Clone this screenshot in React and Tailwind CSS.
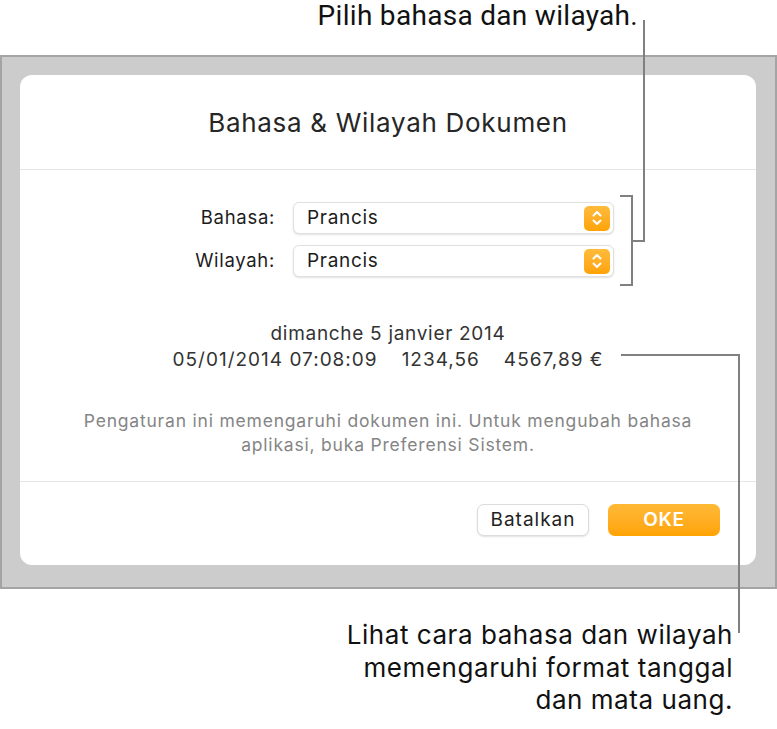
import React from "react";

function Stepper() {
  return (
    <div className="w-[26px] h-[25px] rounded-[5px] bg-gradient-to-b from-[#ffbb3a] to-[#ffa300] flex items-center justify-center">
      <svg width="12" height="18" viewBox="0 0 12 18" fill="none">
        <path d="M2.5 6.5 L6 3 L9.5 6.5" stroke="white" strokeWidth="2" strokeLinecap="round" strokeLinejoin="round" />
        <path d="M2.5 11.5 L6 15 L9.5 11.5" stroke="white" strokeWidth="2" strokeLinecap="round" strokeLinejoin="round" />
      </svg>
    </div>
  );
}

function Row({ label, value }) {
  return (
    <div className="flex items-center h-[32px]">
      <div className="w-[255px] text-right text-[18.5px] tracking-[0.7px] text-[#1c1c1c]">{label}</div>
      <div className="ml-[18px] w-[321px] h-[32px] bg-white rounded-[6px] border border-[#e0e0e0] shadow-[0_1px_2px_rgba(0,0,0,0.12)] flex items-center justify-between pl-[13px] pr-[3px]">
        <span className="text-[19px] tracking-[0.7px] text-[#1c1c1c]">{value}</span>
        <Stepper />
      </div>
    </div>
  );
}

export default function App() {
  return (
    <div className="relative w-[777px] h-[729px] bg-white overflow-hidden" style={{ fontFamily: "Inter, 'Noto Sans', sans-serif" }}>
      <div className="h-[55px] flex items-start justify-end pr-[139px]">
        <span className="text-[28px] leading-[31px] tracking-[0.3px] text-[#111]" style={{ fontFamily: "Roboto, 'Liberation Sans', sans-serif" }}>
          Pilih bahasa dan wilayah.
        </span>
      </div>

      <div className="h-[534px] bg-[#cccccc] border-2 border-[#a4a4a4] pl-[18px] pr-[19px] pt-[18px] pb-[22px]">
        <div className="h-full bg-white rounded-[12px] flex flex-col">
          <div className="h-[95px] flex items-center justify-center border-b border-[#e6e6e6]">
            <span className="text-[26px] tracking-[0.7px] text-[#262626]">Bahasa &amp; Wilayah Dokumen</span>
          </div>

          <div className="pt-[32px] flex flex-col gap-[11px]">
            <Row label="Bahasa:" value="Prancis" />
            <Row label="Wilayah:" value="Prancis" />
          </div>

          <div className="mt-[44px] text-center text-[19px] leading-[26px] text-[#333]">
            <div className="tracking-[0.7px]">dimanche 5 janvier 2014</div>
            <div className="tracking-[1px]">
              05/01/2014 07:08:09<span className="inline-block w-[24px]"></span>1234,56<span className="inline-block w-[24px]"></span>4567,89 €
            </div>
          </div>

          <div className="mt-[36px] text-center text-[17.5px] tracking-[0.8px] leading-[24px] text-[#858585] pb-[24px] border-b border-[#e6e6e6]">
            Pengaturan ini memengaruhi dokumen ini. Untuk mengubah bahasa
            <br />
            aplikasi, buka Preferensi Sistem.
          </div>

          <div className="flex justify-end gap-[19px] pr-[36px] pt-[22px]">
            <button className="w-[112px] h-[32px] rounded-[7px] bg-white border border-[#dcdcdc] shadow-[0_1px_2px_rgba(0,0,0,0.12)] text-[19px] tracking-[1px] text-[#222]">
              Batalkan
            </button>
            <button className="w-[112px] h-[32px] rounded-[7px] bg-gradient-to-b from-[#ffb935] to-[#ffa300] text-[19px] tracking-[0.6px] font-semibold text-white">
              OKE
            </button>
          </div>
        </div>
      </div>

      <div className="mt-[30px] pr-[44px] text-right text-[26px] tracking-[0.55px] leading-[32.5px] text-[#111]">
        <div>Lihat cara bahasa dan wilayah</div>
        <div>memengaruhi format tanggal</div>
        <div>dan mata uang.</div>
      </div>

      <svg className="absolute inset-0 pointer-events-none" width="777" height="729" viewBox="0 0 777 729" fill="none" shapeRendering="crispEdges">
        <path d="M644 20 V241 H632" stroke="#808080" strokeWidth="2" />
        <path d="M620 196 H632 V285 H620" stroke="#808080" strokeWidth="2" />
        <path d="M621 355 H739 V633" stroke="#808080" strokeWidth="2" />
      </svg>
    </div>
  );
}
